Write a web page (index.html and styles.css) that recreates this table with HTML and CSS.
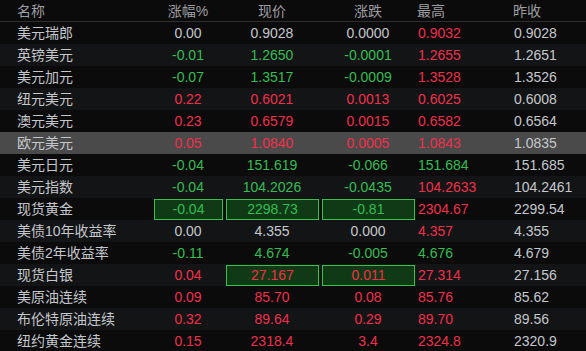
FILE: index.html
```html
<!DOCTYPE html>
<html lang="zh-CN">
<head>
  <meta charset="UTF-8" />
  <meta name="viewport" content="width=device-width, initial-scale=1.0"/>
  <title>外汇行情</title>
  <link rel="stylesheet" href="styles.css">
</head>
<body>
  <div class="quotes">
    <div class="row head">
      <div class="name">名称</div>
      <div class="c">涨幅%</div>
      <div class="c">现价</div>
      <div class="c">涨跌</div>
      <div class="l">最高</div>
      <div class="l">昨收</div>
    </div>
    <div class="row">
      <div class="name">美元瑞郎</div>
      <div class="c">0.00</div>
      <div class="c">0.9028</div>
      <div class="c">0.0000</div>
      <div class="l up">0.9032</div>
      <div class="l">0.9028</div>
    </div>
    <div class="row">
      <div class="name">英镑美元</div>
      <div class="c down">-0.01</div>
      <div class="c down">1.2650</div>
      <div class="c down">-0.0001</div>
      <div class="l up">1.2655</div>
      <div class="l">1.2651</div>
    </div>
    <div class="row">
      <div class="name">美元加元</div>
      <div class="c down">-0.07</div>
      <div class="c down">1.3517</div>
      <div class="c down">-0.0009</div>
      <div class="l up">1.3528</div>
      <div class="l">1.3526</div>
    </div>
    <div class="row">
      <div class="name">纽元美元</div>
      <div class="c up">0.22</div>
      <div class="c up">0.6021</div>
      <div class="c up">0.0013</div>
      <div class="l up">0.6025</div>
      <div class="l">0.6008</div>
    </div>
    <div class="row">
      <div class="name">澳元美元</div>
      <div class="c up">0.23</div>
      <div class="c up">0.6579</div>
      <div class="c up">0.0015</div>
      <div class="l up">0.6582</div>
      <div class="l">0.6564</div>
    </div>
    <div class="row selected">
      <div class="name">欧元美元</div>
      <div class="c up">0.05</div>
      <div class="c up">1.0840</div>
      <div class="c up">0.0005</div>
      <div class="l up">1.0843</div>
      <div class="l">1.0835</div>
    </div>
    <div class="row">
      <div class="name">美元日元</div>
      <div class="c down">-0.04</div>
      <div class="c down">151.619</div>
      <div class="c down">-0.066</div>
      <div class="l down">151.684</div>
      <div class="l">151.685</div>
    </div>
    <div class="row">
      <div class="name">美元指数</div>
      <div class="c down">-0.04</div>
      <div class="c down">104.2026</div>
      <div class="c down">-0.0435</div>
      <div class="l up">104.2633</div>
      <div class="l">104.2461</div>
    </div>
    <div class="row">
      <div class="name">现货黄金</div>
      <div class="c down flash">-0.04</div>
      <div class="c down flash">2298.73</div>
      <div class="c down flash">-0.81</div>
      <div class="l up">2304.67</div>
      <div class="l">2299.54</div>
    </div>
    <div class="row">
      <div class="name">美债10年收益率</div>
      <div class="c">0.00</div>
      <div class="c">4.355</div>
      <div class="c">0.000</div>
      <div class="l up">4.357</div>
      <div class="l">4.355</div>
    </div>
    <div class="row">
      <div class="name">美债2年收益率</div>
      <div class="c down">-0.11</div>
      <div class="c down">4.674</div>
      <div class="c down">-0.005</div>
      <div class="l down">4.676</div>
      <div class="l">4.679</div>
    </div>
    <div class="row">
      <div class="name">现货白银</div>
      <div class="c up">0.04</div>
      <div class="c up flash">27.167</div>
      <div class="c up flash">0.011</div>
      <div class="l up">27.314</div>
      <div class="l">27.156</div>
    </div>
    <div class="row">
      <div class="name">美原油连续</div>
      <div class="c up">0.09</div>
      <div class="c up">85.70</div>
      <div class="c up">0.08</div>
      <div class="l up">85.76</div>
      <div class="l">85.62</div>
    </div>
    <div class="row">
      <div class="name">布伦特原油连续</div>
      <div class="c up">0.32</div>
      <div class="c up">89.64</div>
      <div class="c up">0.29</div>
      <div class="l up">89.70</div>
      <div class="l">89.56</div>
    </div>
    <div class="row">
      <div class="name">纽约黄金连续</div>
      <div class="c up">0.15</div>
      <div class="c up">2318.4</div>
      <div class="c up">3.4</div>
      <div class="l up">2324.8</div>
      <div class="l">2320.9</div>
    </div>
  </div>
</body>
</html>
```

FILE: styles.css
```css
* {
  box-sizing: border-box;
}

body {
  margin: 0;
  background: #0b0b0b;
  font-family: 'Liberation Sans', 'Noto Sans CJK SC', sans-serif;
  font-size: 14px;
  color: #c4c7cb;
  overflow: hidden;
}

.quotes {
  width: 586px;
}

.row {
  display: grid;
  grid-template-columns: 152px 72px 96px 96px 96px 1fr;
  height: 22px;
  line-height: 22px;
  background: #0b0b0b;
}

.row:nth-child(odd) {
  background: #131415;
}

.row.head {
  background: #0b0b0b;
  color: #9c9ea1;
  border-bottom: 1px solid #2e2e2e;
}

.row.selected {
  background: #4a4a4a;
}

.name {
  padding-left: 17px;
  white-space: nowrap;
}

.c {
  text-align: center;
}

.l {
  padding-left: 2px;
}

.head .l {
  padding-left: 1px;
}

.up {
  color: #f0304b;
}

.down {
  color: #34bd52;
}

.flash {
  margin: 1px 1px 0 2px;
  height: 21px;
  line-height: 19px;
  background: #103a15;
  border: 1px solid #36c04c;
}
```
